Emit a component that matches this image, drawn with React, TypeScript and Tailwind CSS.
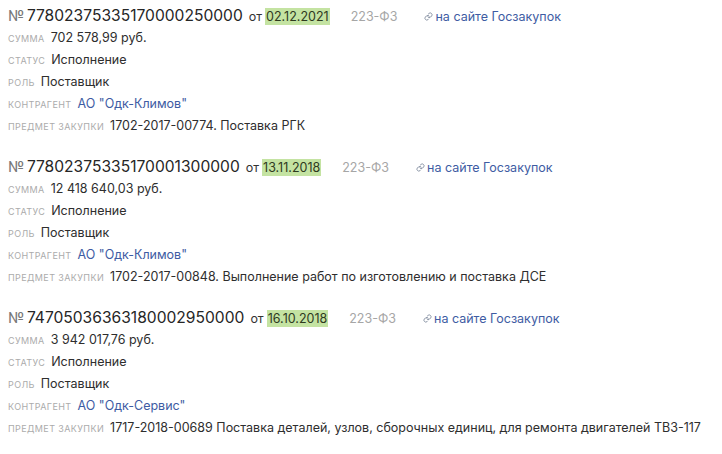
import React from 'react';

type Purchase = {
  num: string;
  date: string;
  sum: string;
  partner: string;
  subject: string;
};

const items: Purchase[] = [
  {
    num: '77802375335170000250000',
    date: '02.12.2021',
    sum: '702 578,99 руб.',
    partner: 'АО "Одк-Климов"',
    subject: '1702-2017-00774. Поставка РГК',
  },
  {
    num: '77802375335170001300000',
    date: '13.11.2018',
    sum: '12 418 640,03 руб.',
    partner: 'АО "Одк-Климов"',
    subject: '1702-2017-00848. Выполнение работ по изготовлению и поставка ДСЕ',
  },
  {
    num: '74705036363180002950000',
    date: '16.10.2018',
    sum: '3 942 017,76 руб.',
    partner: 'АО "Одк-Сервис"',
    subject: '1717-2018-00689 Поставка деталей, узлов, сборочных единиц, для ремонта двигателей ТВ3-117',
  },
];

const LinkIcon = () => (
  <svg width="9" height="9" viewBox="0 0 24 24" fill="none" stroke="#8a94a6" strokeWidth="2.6" strokeLinecap="round">
    <path d="M10 13a5 5 0 0 0 7.5.5l3-3a5 5 0 0 0-7-7l-1.7 1.7" />
    <path d="M14 11a5 5 0 0 0-7.5-.5l-3 3a5 5 0 0 0 7 7l1.7-1.7" />
  </svg>
);

const Row: React.FC<{ label: string; children: React.ReactNode; blue?: boolean }> = ({ label, children, blue }) => (
  <div className="flex items-baseline h-[22px] leading-[22px] whitespace-nowrap">
    <span className="text-[9px] uppercase text-[#ababab] mr-[6px] tracking-[0.4px]">{label}</span>
    <span className={blue ? 'text-[12.5px] text-[#3e5ca3]' : 'text-[12.5px] text-[#2e2e2e]'}>{children}</span>
  </div>
);

const App: React.FC = () => {
  return (
    <div className="w-[722px] h-[454px] bg-white px-[8px] pt-[4px]" style={{ fontFamily: 'Inter, "Noto Sans", sans-serif' }}>
      <div className="flex flex-col gap-[18px]">
        {items.map((it) => (
          <div key={it.num}>
            <div className="flex items-baseline h-[23px] leading-[23px] whitespace-nowrap">
              <span className="text-[15px] text-[#777] mr-[3px] tracking-[-0.5px]">№</span>
              <span className="text-[15.6px] text-[#262626]">{it.num}</span>
              <span className="text-[12.5px] text-[#333] ml-[6px] mr-[3px]">от</span>
              <span className="text-[12.5px] text-[#2e3a1e] bg-[#c4e3a2] px-[1px] leading-[17px]">{it.date}</span>
              <span className="text-[12.5px] text-[#a6a6a6] ml-[21px]">223-ФЗ</span>
              <span className="ml-[27px] flex items-baseline gap-[2px]">
                <LinkIcon />
                <span className="text-[12.5px] text-[#3e5ca3]">на сайте Госзакупок</span>
              </span>
            </div>
            <Row label="Сумма">{it.sum}</Row>
            <Row label="Статус">Исполнение</Row>
            <Row label="Роль">Поставщик</Row>
            <Row label="Контрагент" blue>{it.partner}</Row>
            <Row label="Предмет закупки">{it.subject}</Row>
          </div>
        ))}
      </div>
    </div>
  );
};

export default App;
